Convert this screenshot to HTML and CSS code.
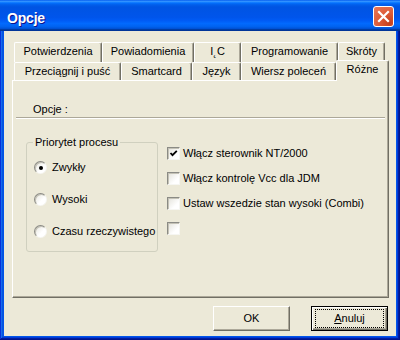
FILE: index.html
```html
<!DOCTYPE html>
<html lang="pl">
<head>
  <meta charset="UTF-8" />
  <title>Opcje</title>
  <link rel="stylesheet" href="styles.css">
</head>
<body>
  <div class="window">
    <div class="titlebar">
      <span class="title">Opcje</span>
      <button class="close" aria-label="Zamknij">
        <svg viewBox="0 0 19 19" width="19" height="19">
          <path d="M5 5 L14 14 M14 5 L5 14" stroke="#fff" stroke-width="2.2" stroke-linecap="square" fill="none" />
        </svg>
      </button>
    </div>

    <div class="client">
      <div class="tabs">
        <div class="tab-row back">
          <span class="tab w88">Potwierdzenia</span>
          <span class="tab w92">Powiadomienia</span>
          <span class="tab w47">I˛C</span>
          <span class="tab w97">Programowanie</span>
          <span class="tab w47">Skróty</span>
        </div>
        <div class="tab-row front">
          <span class="tab w107">Przeciągnij i puść</span>
          <span class="tab w71">Smartcard</span>
          <span class="tab w49">Język</span>
          <span class="tab w95">Wiersz poleceń</span>
          <span class="tab active">Różne</span>
        </div>
      </div>

      <div class="panel">
        <div class="section-label">Opcje :</div>
        <div class="separator"></div>

        <div class="options">
          <div class="group">
            <span class="group-title">Priorytet procesu</span>
            <div class="radios">
              <label class="radio"><span class="radio-box checked"></span>Zwykły</label>
              <label class="radio"><span class="radio-box"></span>Wysoki</label>
              <label class="radio"><span class="radio-box"></span>Czasu rzeczywistego</label>
            </div>
          </div>

          <div class="checks">
            <label class="check">
              <span class="check-box">
                <svg viewBox="0 0 11 11" width="11" height="11">
                  <path d="M2.5 5 L4.5 7.2 L8.8 2.8" stroke="#000" stroke-width="1.8" fill="none" />
                </svg>
              </span>
              Włącz sterownik NT/2000
            </label>
            <label class="check"><span class="check-box"></span>Włącz kontrolę Vcc dla JDM</label>
            <label class="check"><span class="check-box"></span>Ustaw wszedzie stan wysoki (Combi)</label>
            <label class="check"><span class="check-box"></span></label>
          </div>
        </div>
      </div>

      <div class="buttons">
        <button class="btn">OK</button>
        <button class="btn default"><span class="focus"><u>A</u>nuluj</span></button>
      </div>
    </div>
  </div>
</body>
</html>
```

FILE: styles.css
```css
:root {
  --face: #ece9d8;
  --light: #ffffff;
  --shadow: #aca899;
  --dark: #716f64;
  --text: #000000;
}

* {
  box-sizing: border-box;
  margin: 0;
  padding: 0;
}

body {
  width: 400px;
  height: 340px;
  overflow: hidden;
  background: #0831d9;
  font-family: 'Liberation Sans', 'DejaVu Sans', sans-serif;
  font-size: 11px;
  line-height: 13px;
  color: var(--text);
}

.window {
  width: 400px;
  height: 340px;
  display: flex;
  flex-direction: column;
  background: #0055ea;
  box-shadow:
    inset -1px -1px #00138c,
    inset 1px 1px #0831d9,
    inset -2px -2px #001ea0,
    inset 2px 2px #166aee,
    inset -3px -3px #003bda,
    inset 3px 3px #0855dd;
}

/* title bar */

.titlebar {
  height: 31px;
  flex-shrink: 0;
  display: flex;
  justify-content: space-between;
  align-items: flex-start;
  padding: 0 6px 0 7px;
  background: linear-gradient(to bottom,
    #0058ee 0%, #3593ff 4%, #288eff 6%, #127dff 8%, #036ffc 10%,
    #0262ee 14%, #0057e5 20%, #0054e3 24%, #0055eb 56%, #005bf5 66%,
    #026afe 76%, #0062ef 86%, #0052d6 92%, #0040ab 94%, #003092 100%);
}

.title {
  margin-top: 10px;
  font-size: 14px;
  line-height: 16px;
  font-weight: bold;
  color: #fff;
  text-shadow: 1px 1px #0f1089;
  letter-spacing: -0.2px;
}

.close {
  margin-top: 6px;
  width: 21px;
  height: 21px;
  border: 1px solid #fff;
  border-radius: 3px;
  background: radial-gradient(circle at 80% 85%, #c43f1c 0%, #dd5a36 45%, #e8785a 100%);
  display: flex;
  align-items: center;
  justify-content: center;
}

.close svg {
  display: block;
}

/* client area */

.client {
  flex: 1;
  margin: 0 4px 4px 4px;
  background: var(--face);
  display: flex;
  flex-direction: column;
}

.tabs {
  margin-top: 11px;
  padding-left: 10px;
}

.tab-row {
  display: flex;
}

.tab-row.back {
  height: 20px;
}

.tab-row.front {
  height: 18px;
  align-items: flex-end;
}

.tab {
  display: block;
  flex-shrink: 0;
  height: 100%;
  padding-top: 2px;
  border: 1px solid var(--light);
  border-bottom: none;
  border-right-color: var(--dark);
  border-radius: 2px 2px 0 0;
  box-shadow: inset -1px 0 var(--shadow);
  background: var(--face);
  text-align: center;
  white-space: nowrap;
}

.tab.w47 { width: 47px; }
.tab.w49 { width: 49px; }
.tab.w71 { width: 71px; }
.tab.w88 { width: 88px; }
.tab.w92 { width: 92px; }
.tab.w95 { width: 95px; }
.tab.w97 { width: 97px; }
.tab.w107 { width: 107px; }

.tab.active {
  position: relative;
  z-index: 1;
  width: 53px;
  height: 21px;
  margin-bottom: -1px;
}

.panel {
  width: 377px;
  height: 218px;
  margin-left: 8px;
  padding: 22px 3px 0 3px;
  border: 1px solid var(--light);
  border-right-color: var(--dark);
  border-bottom-color: var(--dark);
  box-shadow: inset -1px -1px var(--shadow);
}

.section-label {
  margin-left: 17px;
}

.separator {
  margin-top: 1px;
  height: 2px;
  border-top: 1px solid var(--shadow);
  border-bottom: 1px solid var(--light);
}

.options {
  display: flex;
  align-items: flex-start;
  margin-top: 23px;
  margin-left: 10px;
}

/* group box */

.group {
  width: 132px;
  height: 110px;
  border: 1px solid #d0d0bf;
  border-radius: 3px;
  padding: 0 0 0 6px;
}

.group-title {
  display: block;
  width: max-content;
  margin-top: -7px;
  padding: 0 2px;
  background: var(--face);
}

.radios {
  display: flex;
  flex-direction: column;
  gap: 19px;
  margin-top: 12px;
}

.radio {
  display: flex;
  align-items: center;
  height: 13px;
  padding-left: 1px;
  white-space: nowrap;
  overflow: hidden;
}

.radio-box {
  flex-shrink: 0;
  width: 13px;
  height: 13px;
  margin-right: 5px;
  border-radius: 50%;
  border: 1px solid;
  border-color: #8b8b85 #f6f6f2 #f6f6f2 #8b8b85;
  background: linear-gradient(135deg, #e6e5dc 0%, #ffffff 60%);
  box-shadow: inset 1px 1px #c4c2b6;
  display: flex;
  align-items: center;
  justify-content: center;
}

.radio-box.checked::after {
  content: '';
  width: 4px;
  height: 4px;
  border-radius: 50%;
  background: #000;
}

/* check boxes */

.checks {
  display: flex;
  flex-direction: column;
  gap: 12px;
  margin-left: 9px;
  padding-top: 5px;
}

.check {
  display: flex;
  align-items: center;
  height: 13px;
  white-space: nowrap;
}

.check-box {
  flex-shrink: 0;
  width: 13px;
  height: 13px;
  margin-right: 3px;
  border: 1px solid;
  border-color: #8b8b85 #f6f6f2 #f6f6f2 #8b8b85;
  background: linear-gradient(135deg, #e3e2da 0%, #ffffff 70%);
  box-shadow: inset 1px 1px #c4c2b6;
  display: flex;
  align-items: center;
  justify-content: center;
}

.check-box svg {
  display: block;
}

/* dialog buttons */

.buttons {
  display: flex;
  justify-content: flex-end;
  gap: 21px;
  margin-top: 8px;
  padding-right: 8px;
}

.btn {
  width: 77px;
  height: 25px;
  border: 1px solid var(--light);
  border-right-color: var(--dark);
  border-bottom-color: var(--dark);
  box-shadow: inset -1px -1px var(--shadow);
  background: var(--face);
  font-family: inherit;
  font-size: 11px;
  line-height: 13px;
  color: var(--text);
}

.btn.default {
  border: 1px solid #000;
  box-shadow:
    inset 1px 1px var(--light),
    inset -1px -1px var(--dark),
    inset -2px -2px var(--shadow);
  padding: 2px 3px;
}

.btn .focus {
  display: flex;
  align-items: center;
  justify-content: center;
  height: 100%;
  border: 1px dotted #000;
}
```
